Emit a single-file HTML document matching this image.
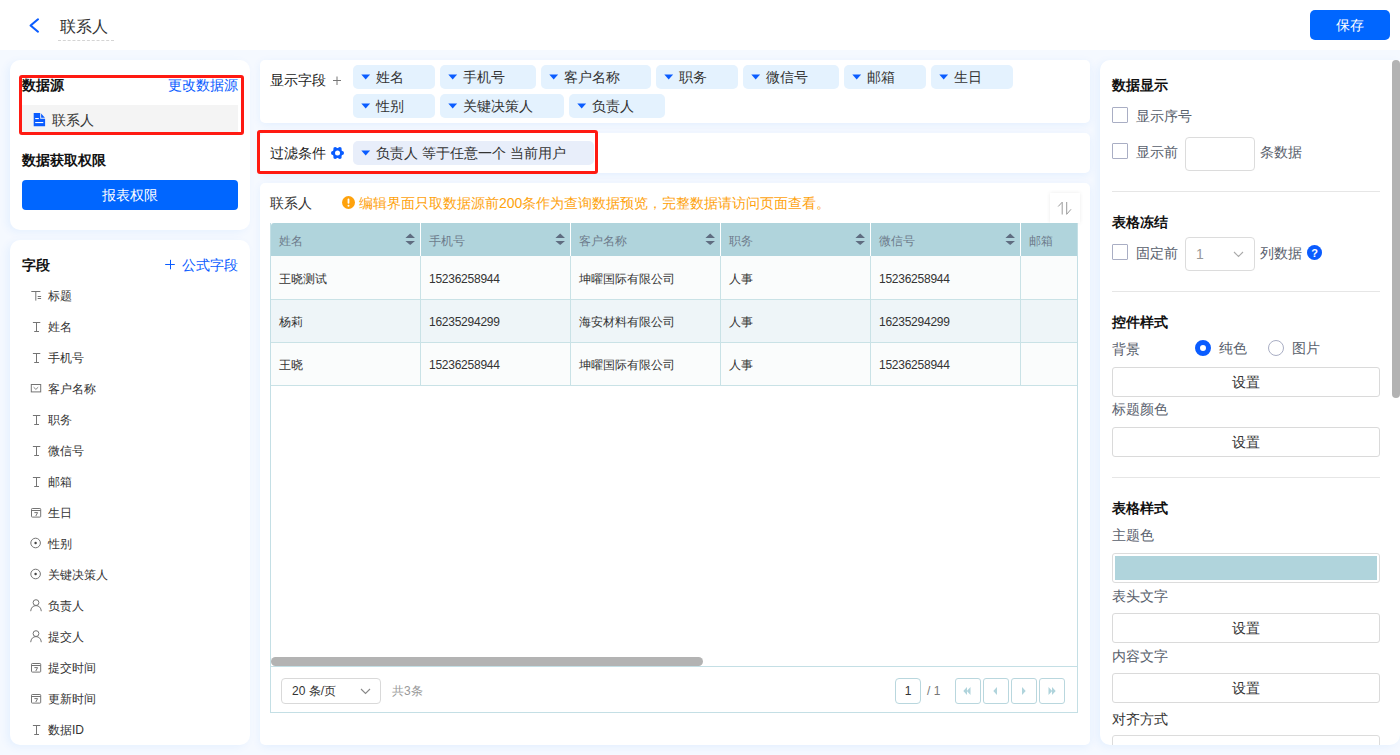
<!DOCTYPE html>
<html><head><meta charset="utf-8">
<style>
*{box-sizing:border-box;margin:0;padding:0}
html,body{width:1400px;height:755px;overflow:hidden}
body{position:relative;background:#f5f9ff;font-family:"Liberation Sans",sans-serif;color:#333;font-size:14px}
.a{position:absolute}
.t{position:absolute;line-height:20px;white-space:nowrap}
.b{font-weight:bold;color:#111}
.card{position:absolute;background:#fff;box-shadow:-3px 2px 8px rgba(0,120,255,.065)}
.card.m{box-shadow:0 2px 8px rgba(0,120,255,.075)}
.red{position:absolute;border:3px solid #ff1a12;border-radius:3px}
.chip{position:absolute;height:24px;background:#e4f2fe;border-radius:5px;font-size:14px;line-height:24px;color:#333}
.chip .tri{position:absolute;left:8px;top:9px;width:10px;height:7px}
.chip span{position:absolute;left:23px;top:0;line-height:24px}
.f{position:absolute;left:48px;font-size:12px;line-height:20px;color:#333}
.fi{position:absolute;left:30px;overflow:visible}
.th{position:absolute;top:0;height:33px;background:#b0d4dc;border-right:1px solid #fff}
.th span{position:absolute;left:8px;top:8px;font-size:12px;line-height:20px;color:#6d7b8b}
.sort{position:absolute;left:134px;top:10px;width:11px;height:13px}
.btnw{position:absolute;height:30px;border:1px solid #dadada;border-radius:3px;background:#fff;text-align:center;line-height:28px;font-size:14px;color:#333}
.lbl{position:absolute;left:12px;line-height:20px;font-size:14px;color:#666;white-space:nowrap}
.cb{position:absolute;left:12px;width:16px;height:16px;border:1px solid #a9aec4;border-radius:1px;background:#fff}
.pg{position:absolute;top:12px;width:26px;height:26px;border:1px solid #b9d7de;border-radius:3px;background:#fff}
</style></head><body>

<!-- header -->
<div class="a" style="left:0;top:0;width:1400px;height:50px;background:#fff"></div>
<svg class="a" style="left:26px;top:15px" width="16" height="20" viewBox="0 0 16 20"><path d="M12 4.3 L4.6 10.5 L12 16.7" fill="none" stroke="#0a5cff" stroke-width="2.1" stroke-linecap="round" stroke-linejoin="round"/></svg>
<div class="t" style="left:60px;top:17px;font-size:16px;color:#333">联系人</div>
<div class="a" style="left:58px;top:40px;width:56px;height:0;border-top:1px dashed #d4d4d4"></div>
<div class="a" style="left:1310px;top:10px;width:80px;height:30px;background:#0066ff;border-radius:5px;color:#fff;text-align:center;line-height:30px;font-size:14px">保存</div>

<!-- left panel 1 -->
<div class="card" style="left:10px;top:60px;width:240px;height:170px;border-radius:10px"></div>
<div class="t b" style="left:22px;top:75px">数据源</div>
<div class="t" style="left:168px;top:75px;color:#0a5cff">更改数据源</div>
<div class="a" style="left:22px;top:105px;width:216px;height:27px;background:#f4f4f4"></div>
<svg class="a" style="left:30px;top:110px" width="20" height="20" viewBox="30 110 20 20"><path d="M33.7 113H40.2V118.7H45.1V126.2H33.7Z" fill="#0a5cff"/><path d="M41.1 113.4L44.9 117.8H41.1Z" fill="#0a5cff"/><rect x="35.2" y="118" width="3.6" height="1.1" fill="#fff"/><rect x="35.2" y="122" width="8.1" height="1.1" fill="#fff"/></svg>
<div class="t" style="left:52px;top:110px;color:#333">联系人</div>
<div class="red" style="left:19px;top:75px;width:225px;height:60px"></div>
<div class="t b" style="left:22px;top:150px">数据获取权限</div>
<div class="a" style="left:22px;top:180px;width:216px;height:30px;background:#0066ff;border-radius:4px;color:#fff;text-align:center;line-height:30px;font-size:14px">报表权限</div>

<!-- left panel 2 -->
<div class="card" style="left:10px;top:240px;width:240px;height:505px;border-radius:10px"></div>
<div class="t b" style="left:22px;top:255px">字段</div>
<svg class="a" style="left:165px;top:259px" width="10" height="11" viewBox="0 0 10 11"><path d="M0.2 5.5H9.8M5.5 0.8V10.3" stroke="#0a5cff" stroke-width="1" fill="none"/></svg><div class="t" style="left:182px;top:255px;color:#0a5cff;font-size:14px">公式字段</div>

<svg class="fi" style="top:290px" width="12" height="12" viewBox="0 0 12 12"><path d="M1.3 1.5H10.4M5.8 1.5V10.6M7.7 6.5H11.1M7.7 8.5H11.1" stroke="#747474" stroke-width="1" fill="none"/></svg>
<div class="f" style="top:286px">标题</div>
<svg class="fi" style="top:321px" width="12" height="12" viewBox="0 0 12 12"><path d="M2.9 1.5H10.3M6.5 1.5V10M4.2 10.5H9" stroke="#747474" stroke-width="1" fill="none"/></svg>
<div class="f" style="top:317px">姓名</div>
<svg class="fi" style="top:352px" width="12" height="12" viewBox="0 0 12 12"><path d="M2.9 1.5H10.3M6.5 1.5V10M4.2 10.5H9" stroke="#747474" stroke-width="1" fill="none"/></svg>
<div class="f" style="top:348px">手机号</div>
<svg class="fi" style="top:383px" width="12" height="12" viewBox="0 0 12 12"><rect x="1.3" y="1.5" width="9.4" height="7.4" stroke="#747474" stroke-width="1" fill="none"/><path d="M3.6 4.2L5.9 6.4L8.2 4.2" stroke="#747474" stroke-width="0.9" fill="none"/></svg>
<div class="f" style="top:379px">客户名称</div>
<svg class="fi" style="top:414px" width="12" height="12" viewBox="0 0 12 12"><path d="M2.9 1.5H10.3M6.5 1.5V10M4.2 10.5H9" stroke="#747474" stroke-width="1" fill="none"/></svg>
<div class="f" style="top:410px">职务</div>
<svg class="fi" style="top:445px" width="12" height="12" viewBox="0 0 12 12"><path d="M2.9 1.5H10.3M6.5 1.5V10M4.2 10.5H9" stroke="#747474" stroke-width="1" fill="none"/></svg>
<div class="f" style="top:441px">微信号</div>
<svg class="fi" style="top:476px" width="12" height="12" viewBox="0 0 12 12"><path d="M2.9 1.5H10.3M6.5 1.5V10M4.2 10.5H9" stroke="#747474" stroke-width="1" fill="none"/></svg>
<div class="f" style="top:472px">邮箱</div>
<svg class="fi" style="top:507px" width="12" height="12" viewBox="0 0 12 12"><rect x="1.5" y="1.5" width="9.2" height="8.6" rx="0.8" stroke="#747474" stroke-width="1" fill="none"/><path d="M1.5 3.5H10.7M4.4 5.6H7.6L5.8 9" stroke="#747474" stroke-width="1" fill="none"/></svg>
<div class="f" style="top:503px">生日</div>
<svg class="fi" style="top:538px" width="12" height="12" viewBox="0 0 12 12"><circle cx="5.6" cy="5" r="4.8" stroke="#747474" stroke-width="1" fill="none"/><circle cx="5.6" cy="5" r="1.2" fill="#444"/></svg>
<div class="f" style="top:534px">性别</div>
<svg class="fi" style="top:569px" width="12" height="12" viewBox="0 0 12 12"><circle cx="5.6" cy="5" r="4.8" stroke="#747474" stroke-width="1" fill="none"/><circle cx="5.6" cy="5" r="1.2" fill="#444"/></svg>
<div class="f" style="top:565px">关键决策人</div>
<svg class="fi" style="top:598px" width="12" height="15" viewBox="0 0 12 15"><circle cx="6" cy="4.6" r="2.9" stroke="#747474" stroke-width="1" fill="none"/><path d="M0.7 13.2C0.9 9.7 3.1 7.6 6 7.6S11.1 9.7 11.3 13.2" stroke="#747474" stroke-width="1" fill="none"/></svg>
<div class="f" style="top:596px">负责人</div>
<svg class="fi" style="top:629px" width="12" height="15" viewBox="0 0 12 15"><circle cx="6" cy="4.6" r="2.9" stroke="#747474" stroke-width="1" fill="none"/><path d="M0.7 13.2C0.9 9.7 3.1 7.6 6 7.6S11.1 9.7 11.3 13.2" stroke="#747474" stroke-width="1" fill="none"/></svg>
<div class="f" style="top:627px">提交人</div>
<svg class="fi" style="top:662px" width="12" height="12" viewBox="0 0 12 12"><rect x="1.5" y="1.5" width="9.2" height="8.6" rx="0.8" stroke="#747474" stroke-width="1" fill="none"/><path d="M1.5 3.5H10.7M4.4 5.6H7.6L5.8 9" stroke="#747474" stroke-width="1" fill="none"/></svg>
<div class="f" style="top:658px">提交时间</div>
<svg class="fi" style="top:693px" width="12" height="12" viewBox="0 0 12 12"><rect x="1.5" y="1.5" width="9.2" height="8.6" rx="0.8" stroke="#747474" stroke-width="1" fill="none"/><path d="M1.5 3.5H10.7M4.4 5.6H7.6L5.8 9" stroke="#747474" stroke-width="1" fill="none"/></svg>
<div class="f" style="top:689px">更新时间</div>
<svg class="fi" style="top:724px" width="12" height="12" viewBox="0 0 12 12"><path d="M2.9 1.5H10.3M6.5 1.5V10M4.2 10.5H9" stroke="#747474" stroke-width="1" fill="none"/></svg>
<div class="f" style="top:720px">数据ID</div>

<!-- middle card 1 -->
<div class="card m" style="left:260px;top:60px;width:830px;height:63px;border-radius:5px"></div>
<div class="t" style="left:270px;top:70px;color:#222">显示字段</div>
<svg class="a" style="left:332px;top:75px" width="10" height="11" viewBox="0 0 10 11"><path d="M1 5.5H9M5 1.5V10" stroke="#777" stroke-width="1" fill="none"/></svg>
<div class="chip" style="left:353px;top:65px;width:82px"><svg class="tri" width="10" height="7" viewBox="0 0 10 7"><path d="M0.3 0.5H9.1L4.7 5.6Z" fill="#0a5cff"/></svg><span>姓名</span></div>
<div class="chip" style="left:440px;top:65px;width:96px"><svg class="tri" width="10" height="7" viewBox="0 0 10 7"><path d="M0.3 0.5H9.1L4.7 5.6Z" fill="#0a5cff"/></svg><span>手机号</span></div>
<div class="chip" style="left:541px;top:65px;width:110px"><svg class="tri" width="10" height="7" viewBox="0 0 10 7"><path d="M0.3 0.5H9.1L4.7 5.6Z" fill="#0a5cff"/></svg><span>客户名称</span></div>
<div class="chip" style="left:656px;top:65px;width:82px"><svg class="tri" width="10" height="7" viewBox="0 0 10 7"><path d="M0.3 0.5H9.1L4.7 5.6Z" fill="#0a5cff"/></svg><span>职务</span></div>
<div class="chip" style="left:743px;top:65px;width:96px"><svg class="tri" width="10" height="7" viewBox="0 0 10 7"><path d="M0.3 0.5H9.1L4.7 5.6Z" fill="#0a5cff"/></svg><span>微信号</span></div>
<div class="chip" style="left:844px;top:65px;width:82px"><svg class="tri" width="10" height="7" viewBox="0 0 10 7"><path d="M0.3 0.5H9.1L4.7 5.6Z" fill="#0a5cff"/></svg><span>邮箱</span></div>
<div class="chip" style="left:931px;top:65px;width:82px"><svg class="tri" width="10" height="7" viewBox="0 0 10 7"><path d="M0.3 0.5H9.1L4.7 5.6Z" fill="#0a5cff"/></svg><span>生日</span></div>
<div class="chip" style="left:353px;top:94px;width:82px"><svg class="tri" width="10" height="7" viewBox="0 0 10 7"><path d="M0.3 0.5H9.1L4.7 5.6Z" fill="#0a5cff"/></svg><span>性别</span></div>
<div class="chip" style="left:440px;top:94px;width:124px"><svg class="tri" width="10" height="7" viewBox="0 0 10 7"><path d="M0.3 0.5H9.1L4.7 5.6Z" fill="#0a5cff"/></svg><span>关键决策人</span></div>
<div class="chip" style="left:569px;top:94px;width:96px"><svg class="tri" width="10" height="7" viewBox="0 0 10 7"><path d="M0.3 0.5H9.1L4.7 5.6Z" fill="#0a5cff"/></svg><span>负责人</span></div>

<!-- middle card 2 -->
<div class="card m" style="left:260px;top:133px;width:830px;height:40px;border-radius:5px"></div>
<div class="t" style="left:270px;top:143px;color:#222">过滤条件</div>
<svg class="a" style="left:330px;top:146px" width="15" height="14" viewBox="0 0 15 14"><g fill="#0a5cff" transform="translate(7.5 7)"><circle r="5"/><circle cx="4.60" cy="0.00" r="1.9"/><circle cx="2.30" cy="3.98" r="1.9"/><circle cx="-2.30" cy="3.98" r="1.9"/><circle cx="-4.60" cy="0.00" r="1.9"/><circle cx="-2.30" cy="-3.98" r="1.9"/><circle cx="2.30" cy="-3.98" r="1.9"/></g><circle cx="7.5" cy="7" r="2.5" fill="#fff"/></svg>
<div class="chip" style="left:353px;top:141px;width:241px;background:#e8eefa"><svg class="tri" width="10" height="7" viewBox="0 0 10 7"><path d="M0.3 0.5H9.1L4.7 5.6Z" fill="#0a5cff"/></svg><span>负责人 等于任意一个 当前用户</span></div>
<div class="red" style="left:257px;top:130px;width:341px;height:44px"></div>

<!-- middle card 3 -->
<div class="card m" style="left:260px;top:183px;width:830px;height:562px;border-radius:5px"></div>
<div class="t" style="left:270px;top:193px;color:#333">联系人</div>
<svg class="a" style="left:342px;top:196px" width="13" height="13" viewBox="0 0 13 13"><circle cx="6.5" cy="6.5" r="6.5" fill="#fea20c"/><rect x="5.6" y="2.6" width="1.8" height="5.2" rx=".8" fill="#fff"/><circle cx="6.5" cy="9.8" r="1" fill="#fff"/></svg>
<div class="t" style="left:359px;top:193px;color:#fea20c">编辑界面只取数据源前200条作为查询数据预览，完整数据请访问页面查看。</div>
<div class="a" style="left:1050px;top:193px;width:30px;height:30px;background:#fff;box-shadow:0 0 4px rgba(0,0,0,.08)"></div>
<svg class="a" style="left:1050px;top:193px" width="30" height="30" viewBox="1050 193 30 30"><path d="M1062.2 214.5V202.2L1058.2 206.5M1066.7 202V214.3L1071 209.3" stroke="#9a9a9a" stroke-width="1" fill="none"/></svg>

<div class="a" style="left:270px;top:223px;width:808px;height:490px;border:1px solid #c4dfe5;border-top:none;overflow:hidden;background:#fff">
<div class="th" style="left:0px;width:150px;border-top-left-radius:3px;"><span>姓名</span><svg class="sort" width="11" height="13" viewBox="0 0 11 13"><path d="M0.4 4.9L5.2 0.5L10 4.9Z M0.4 7.9H10L5.2 11.9Z" fill="#5f6c80"/></svg></div>
<div class="th" style="left:150px;width:150px;"><span>手机号</span><svg class="sort" width="11" height="13" viewBox="0 0 11 13"><path d="M0.4 4.9L5.2 0.5L10 4.9Z M0.4 7.9H10L5.2 11.9Z" fill="#5f6c80"/></svg></div>
<div class="th" style="left:300px;width:150px;"><span>客户名称</span><svg class="sort" width="11" height="13" viewBox="0 0 11 13"><path d="M0.4 4.9L5.2 0.5L10 4.9Z M0.4 7.9H10L5.2 11.9Z" fill="#5f6c80"/></svg></div>
<div class="th" style="left:450px;width:150px;"><span>职务</span><svg class="sort" width="11" height="13" viewBox="0 0 11 13"><path d="M0.4 4.9L5.2 0.5L10 4.9Z M0.4 7.9H10L5.2 11.9Z" fill="#5f6c80"/></svg></div>
<div class="th" style="left:600px;width:150px;"><span>微信号</span><svg class="sort" width="11" height="13" viewBox="0 0 11 13"><path d="M0.4 4.9L5.2 0.5L10 4.9Z M0.4 7.9H10L5.2 11.9Z" fill="#5f6c80"/></svg></div>
<div class="th" style="left:750px;width:150px;"><span>邮箱</span></div>
<div class="a" style="left:0px;top:33px;width:150px;height:44px;background:#fafcfc;border-right:1px solid #c9e2e6;border-bottom:1px solid #c9e2e6"><span class="t" style="left:8px;top:13px;font-size:12px;color:#333;">王晓测试</span></div>
<div class="a" style="left:150px;top:33px;width:150px;height:44px;background:#fafcfc;border-right:1px solid #c9e2e6;border-bottom:1px solid #c9e2e6"><span class="t" style="left:8px;top:13px;font-size:12px;color:#333;letter-spacing:-0.25px;">15236258944</span></div>
<div class="a" style="left:300px;top:33px;width:150px;height:44px;background:#fafcfc;border-right:1px solid #c9e2e6;border-bottom:1px solid #c9e2e6"><span class="t" style="left:8px;top:13px;font-size:12px;color:#333;">坤曜国际有限公司</span></div>
<div class="a" style="left:450px;top:33px;width:150px;height:44px;background:#fafcfc;border-right:1px solid #c9e2e6;border-bottom:1px solid #c9e2e6"><span class="t" style="left:8px;top:13px;font-size:12px;color:#333;">人事</span></div>
<div class="a" style="left:600px;top:33px;width:150px;height:44px;background:#fafcfc;border-right:1px solid #c9e2e6;border-bottom:1px solid #c9e2e6"><span class="t" style="left:8px;top:13px;font-size:12px;color:#333;letter-spacing:-0.25px;">15236258944</span></div>
<div class="a" style="left:750px;top:33px;width:150px;height:44px;background:#fafcfc;border-right:1px solid #c9e2e6;border-bottom:1px solid #c9e2e6"><span class="t" style="left:8px;top:13px;font-size:12px;color:#333;"></span></div>
<div class="a" style="left:0px;top:77px;width:150px;height:43px;background:#eef5f8;border-right:1px solid #c9e2e6;border-bottom:1px solid #c9e2e6"><span class="t" style="left:8px;top:12px;font-size:12px;color:#333;">杨莉</span></div>
<div class="a" style="left:150px;top:77px;width:150px;height:43px;background:#eef5f8;border-right:1px solid #c9e2e6;border-bottom:1px solid #c9e2e6"><span class="t" style="left:8px;top:12px;font-size:12px;color:#333;letter-spacing:-0.25px;">16235294299</span></div>
<div class="a" style="left:300px;top:77px;width:150px;height:43px;background:#eef5f8;border-right:1px solid #c9e2e6;border-bottom:1px solid #c9e2e6"><span class="t" style="left:8px;top:12px;font-size:12px;color:#333;">海安材料有限公司</span></div>
<div class="a" style="left:450px;top:77px;width:150px;height:43px;background:#eef5f8;border-right:1px solid #c9e2e6;border-bottom:1px solid #c9e2e6"><span class="t" style="left:8px;top:12px;font-size:12px;color:#333;">人事</span></div>
<div class="a" style="left:600px;top:77px;width:150px;height:43px;background:#eef5f8;border-right:1px solid #c9e2e6;border-bottom:1px solid #c9e2e6"><span class="t" style="left:8px;top:12px;font-size:12px;color:#333;letter-spacing:-0.25px;">16235294299</span></div>
<div class="a" style="left:750px;top:77px;width:150px;height:43px;background:#eef5f8;border-right:1px solid #c9e2e6;border-bottom:1px solid #c9e2e6"><span class="t" style="left:8px;top:12px;font-size:12px;color:#333;"></span></div>
<div class="a" style="left:0px;top:120px;width:150px;height:43px;background:#fafcfc;border-right:1px solid #c9e2e6;border-bottom:1px solid #c9e2e6"><span class="t" style="left:8px;top:12px;font-size:12px;color:#333;">王晓</span></div>
<div class="a" style="left:150px;top:120px;width:150px;height:43px;background:#fafcfc;border-right:1px solid #c9e2e6;border-bottom:1px solid #c9e2e6"><span class="t" style="left:8px;top:12px;font-size:12px;color:#333;letter-spacing:-0.25px;">15236258944</span></div>
<div class="a" style="left:300px;top:120px;width:150px;height:43px;background:#fafcfc;border-right:1px solid #c9e2e6;border-bottom:1px solid #c9e2e6"><span class="t" style="left:8px;top:12px;font-size:12px;color:#333;">坤曜国际有限公司</span></div>
<div class="a" style="left:450px;top:120px;width:150px;height:43px;background:#fafcfc;border-right:1px solid #c9e2e6;border-bottom:1px solid #c9e2e6"><span class="t" style="left:8px;top:12px;font-size:12px;color:#333;">人事</span></div>
<div class="a" style="left:600px;top:120px;width:150px;height:43px;background:#fafcfc;border-right:1px solid #c9e2e6;border-bottom:1px solid #c9e2e6"><span class="t" style="left:8px;top:12px;font-size:12px;color:#333;letter-spacing:-0.25px;">15236258944</span></div>
<div class="a" style="left:750px;top:120px;width:150px;height:43px;background:#fafcfc;border-right:1px solid #c9e2e6;border-bottom:1px solid #c9e2e6"><span class="t" style="left:8px;top:12px;font-size:12px;color:#333;"></span></div>
<div class="a" style="left:0px;top:434px;width:432px;height:9px;background:#b3b3b3;border-radius:5px"></div>
<div class="a" style="left:0;top:443px;width:807px;height:0;border-top:1px solid #c4dfe5"></div>
<div class="a" style="left:10px;top:455px;width:100px;height:26px;border:1px solid #d9d9d9;border-radius:4px;background:#fff"><span class="t" style="left:10px;top:2px;font-size:12px;color:#333">20 条/页</span><svg class="a" style="left:78px;top:9px" width="11" height="7" viewBox="0 0 11 7"><path d="M1 1L5.5 5.5L10 1" stroke="#888" stroke-width="1.1" fill="none"/></svg></div>
<span class="t" style="left:121px;top:458px;font-size:12px;color:#999">共3条</span>
<div class="a" style="left:624px;top:455px;width:26px;height:26px;border:1px solid #b9d7de;border-radius:4px;background:#fff;text-align:center;line-height:24px;font-size:12px;color:#333">1</div>
<span class="t" style="left:656px;top:458px;font-size:12px;color:#777">/ 1</span>
<div class="a" style="left:684px;top:455px;width:26px;height:26px;border:1px solid #b9d7de;border-radius:3px;background:#fff"><svg class="a" style="left:6px;top:6px" width="11" height="12" viewBox="0 0 11 12"><path d="M8.5 2L4.8 6L8.5 10Z M5 2L1.3 6L5 10Z" fill="#b0d4dc"/></svg></div>
<div class="a" style="left:712px;top:455px;width:26px;height:26px;border:1px solid #b9d7de;border-radius:3px;background:#fff"><svg class="a" style="left:6px;top:6px" width="11" height="12" viewBox="0 0 11 12"><path d="M7 2L3.3 6L7 10Z" fill="#b0d4dc"/></svg></div>
<div class="a" style="left:740px;top:455px;width:26px;height:26px;border:1px solid #b9d7de;border-radius:3px;background:#fff"><svg class="a" style="left:6px;top:6px" width="11" height="12" viewBox="0 0 11 12"><path d="M4 2L7.7 6L4 10Z" fill="#b0d4dc"/></svg></div>
<div class="a" style="left:768px;top:455px;width:26px;height:26px;border:1px solid #b9d7de;border-radius:3px;background:#fff"><svg class="a" style="left:6px;top:6px" width="11" height="12" viewBox="0 0 11 12"><path d="M2.5 2L6.2 6L2.5 10Z M6 2L9.7 6L6 10Z" fill="#b0d4dc"/></svg></div>
</div>

<!-- right panel -->
<div class="card" style="left:1100px;top:60px;width:300px;height:685px;border-radius:10px 0 10px 10px;overflow:hidden">
</div>
<div class="t" style="left:1112px;top:75px;color:#111;font-weight:bold">数据显示</div>
<div class="cb" style="left:1112px;top:107px"></div>
<div class="t" style="left:1136px;top:106px;color:#58606c;">显示序号</div>
<div class="cb" style="left:1112px;top:143px"></div>
<div class="t" style="left:1136px;top:142px;color:#58606c;">显示前</div>
<div class="a" style="left:1185px;top:137px;width:70px;height:34px;border:1px solid #dcdcdc;border-radius:4px"></div>
<div class="t" style="left:1260px;top:142px;color:#58606c;">条数据</div>
<div class="a" style="left:1112px;top:191px;width:268px;height:1px;background:#e6e6e6"></div>
<div class="t" style="left:1112px;top:212px;color:#111;font-weight:bold">表格冻结</div>
<div class="cb" style="left:1112px;top:244px"></div>
<div class="t" style="left:1136px;top:243px;color:#58606c;">固定前</div>
<div class="a" style="left:1185px;top:237px;width:70px;height:34px;border:1px solid #dcdcdc;border-radius:4px"><span class="t" style="left:10px;top:6px;color:#999">1</span><svg class="a" style="left:47px;top:13px" width="11" height="7" viewBox="0 0 11 7"><path d="M1 1L5.5 5.5L10 1" stroke="#aaa" stroke-width="1.1" fill="none"/></svg></div>
<div class="t" style="left:1260px;top:243px;color:#58606c;">列数据</div>
<svg class="a" style="left:1307px;top:245px" width="15" height="15" viewBox="0 0 15 15"><circle cx="7.5" cy="7.5" r="7.5" fill="#0a5cff"/><text x="7.5" y="11.6" text-anchor="middle" font-size="11" font-weight="bold" fill="#fff" font-family="Liberation Sans">?</text></svg>
<div class="a" style="left:1112px;top:291px;width:268px;height:1px;background:#e6e6e6"></div>
<div class="t" style="left:1112px;top:312px;color:#111;font-weight:bold">控件样式</div>
<div class="t" style="left:1112px;top:339px;color:#58606c;">背景</div>
<div class="a" style="left:1195px;top:340px;width:16px;height:16px;border:5px solid #0a5cff;border-radius:50%;background:#fff"></div>
<div class="t" style="left:1219px;top:338px;color:#58606c;">纯色</div>
<div class="a" style="left:1268px;top:340px;width:16px;height:16px;border:1px solid #a9aec4;border-radius:50%;background:#fff"></div>
<div class="t" style="left:1292px;top:338px;color:#58606c;">图片</div>
<div class="btnw" style="left:1112px;top:367px;width:268px">设置</div>
<div class="t" style="left:1112px;top:399px;color:#58606c;">标题颜色</div>
<div class="btnw" style="left:1112px;top:427px;width:268px">设置</div>
<div class="a" style="left:1112px;top:477px;width:268px;height:1px;background:#e6e6e6"></div>
<div class="t" style="left:1112px;top:498px;color:#111;font-weight:bold">表格样式</div>
<div class="t" style="left:1112px;top:525px;color:#58606c;">主题色</div>
<div class="a" style="left:1112px;top:553px;width:268px;height:30px;border:1px solid #dcdcdc;border-radius:3px;padding:2px"><div style="width:100%;height:100%;background:#b0d4dc"></div></div>
<div class="t" style="left:1112px;top:586px;color:#58606c;">表头文字</div>
<div class="btnw" style="left:1112px;top:613px;width:268px">设置</div>
<div class="t" style="left:1112px;top:646px;color:#58606c;">内容文字</div>
<div class="btnw" style="left:1112px;top:673px;width:268px">设置</div>
<div class="t" style="left:1112px;top:709px;color:#333;">对齐方式</div>
<div class="a" style="left:1112px;top:735px;width:268px;height:10px;overflow:hidden"><div style="width:268px;height:30px;border:1px solid #dcdcdc;border-radius:3px"></div></div>
<div class="a" style="left:1392px;top:60px;width:8px;height:338px;background:#b3b3b3;border-radius:4px"></div>

</body></html>
